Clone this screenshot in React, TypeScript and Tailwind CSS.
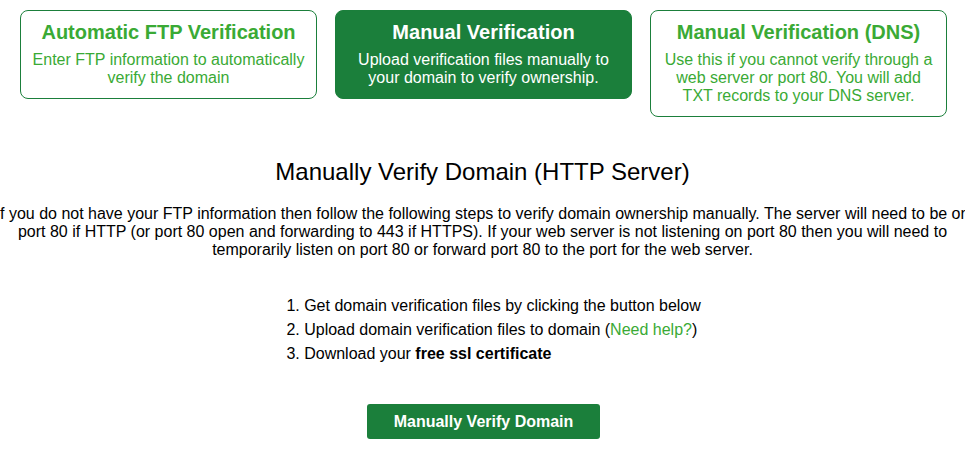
export default function App() {
  const cards = [
    {
      title: "Automatic FTP Verification",
      lines: ["Enter FTP information to automatically", "verify the domain"],
      active: false,
    },
    {
      title: "Manual Verification",
      lines: ["Upload verification files manually to", "your domain to verify ownership."],
      active: true,
    },
    {
      title: "Manual Verification (DNS)",
      lines: ["Use this if you cannot verify through a", "web server or port 80. You will add", "TXT records to your DNS server."],
      active: false,
    },
  ];

  return (
    <div className="min-h-screen w-full overflow-hidden bg-white font-['Liberation_Sans',Arial,sans-serif] text-black">
      <div className="ml-[20px] mr-[18px] mt-[10px] grid grid-cols-3 items-start gap-[18px]">
        {cards.map((card) => (
          <div
            key={card.title}
            className={
              card.active
                ? "rounded-[8px] border border-[#1b7f3b] bg-[#1b7f3b] px-[10px] pb-[11px] pt-[9px] text-center text-white"
                : "rounded-[8px] border border-[#1b7f3b] bg-white px-[10px] pb-[11px] pt-[9px] text-center text-[#3aaa35]"
            }
          >
            <div className="text-[20px] font-bold leading-6">{card.title}</div>
            <div className="mt-[7px] text-[16px] leading-[18px]">
              {card.lines.map((line) => (
                <div key={line}>{line}</div>
              ))}
            </div>
          </div>
        ))}
      </div>

      <h1 className="mt-[41px] text-center text-[24px] leading-7">Manually Verify Domain (HTTP Server)</h1>

      <div className="mt-[19px] flex justify-center">
        <p className="w-[1000px] shrink-0 whitespace-nowrap text-center text-[16px] leading-[18px]">
          If you do not have your FTP information then follow the following steps to verify domain ownership manually. The server will need to be on
          <br />
          port 80 if HTTP (or port 80 open and forwarding to 443 if HTTPS). If your web server is not listening on port 80 then you will need to
          <br />
          temporarily listen on port 80 or forward port 80 to the port for the web server.
        </p>
      </div>

      <div className="mt-[35px] text-center">
        <ol className="inline-block list-decimal pl-10 text-left text-[16px] leading-6">
          <li>Get domain verification files by clicking the button below</li>
          <li>
            Upload domain verification files to domain (<a className="text-[#3aaa35]">Need help?</a>)
          </li>
          <li>
            Download your <b>free ssl certificate</b>
          </li>
        </ol>
      </div>

      <div className="mt-[38px] flex justify-center pl-[2px]">
        <button
          type="button"
          className="h-[35px] w-[233px] rounded-[3px] bg-[#1b7f3b] text-[16px] font-bold text-white"
        >
          Manually Verify Domain
        </button>
      </div>
    </div>
  );
}
